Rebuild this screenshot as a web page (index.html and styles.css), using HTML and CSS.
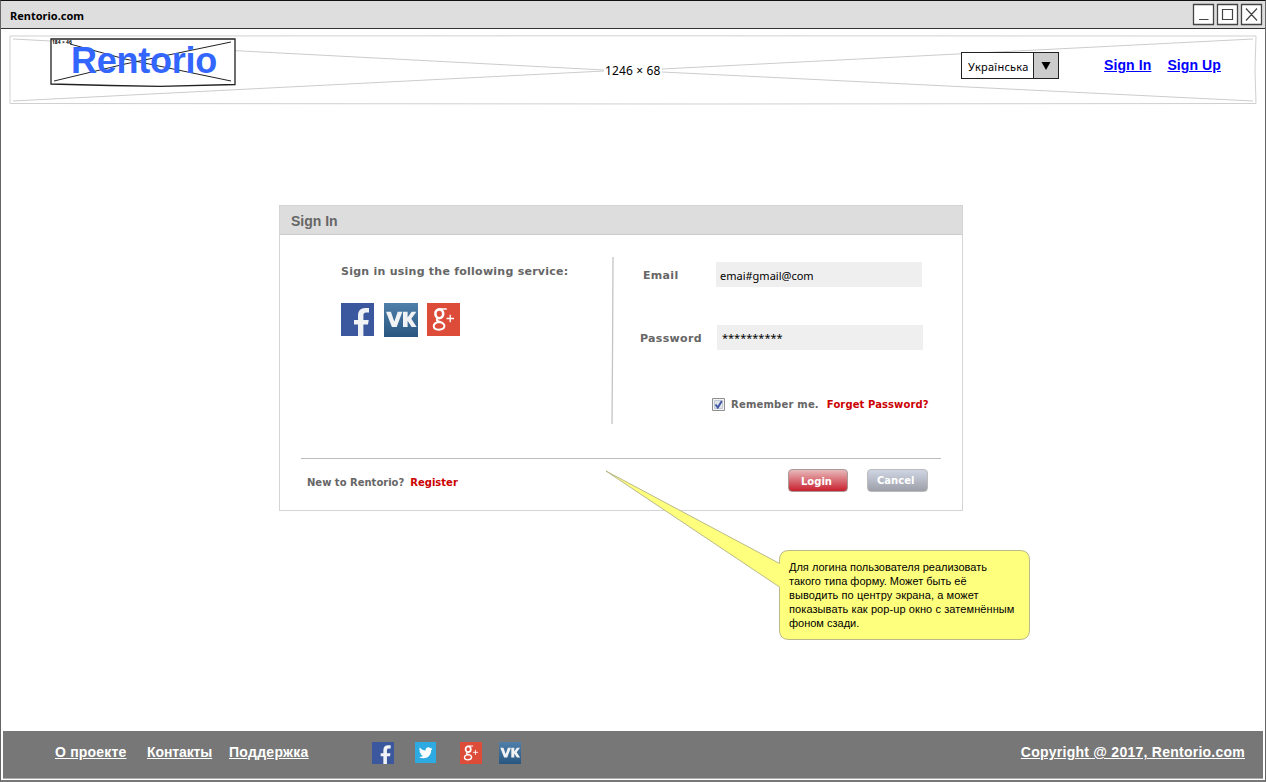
FILE: index.html
```html
<!DOCTYPE html>
<html lang="uk">
<head>
<meta charset="utf-8">
<title>Rentorio.com</title>
<link rel="stylesheet" href="styles.css">
</head>
<body>
<svg class="defs" width="0" height="0" aria-hidden="true">
  <defs>
    <linearGradient id="vkg" x1="0" y1="0" x2="0" y2="1"><stop offset="0" stop-color="#4f80aa"/><stop offset="1" stop-color="#285680"/></linearGradient>
    <symbol id="fb" viewBox="0 0 33 33"><rect width="33" height="33" fill="#3b579d"/><path d="M17 33V21.500h-4v-4.600h4V13c0-5.300 2.500-8 7.300-8H28v4.600h-2.700c-2.300 0-2.900 1-2.900 3.200v4.100h5.300l-.7 4.600h-4.600V33z" fill="#f1f2f5"/></symbol>
    <symbol id="vk" viewBox="0 0 34 34"><rect width="34" height="34" fill="url(#vkg)"/><path d="M2 8.800h4.900l3.400 9.700 3.400-9.700h4.700L12.700 24H7.900zM19 8.800h4.600v5.700l4-5.700h4.800l-5.100 7 5.400 8.200h-5.100l-4-6.300V24H19z" fill="#f0f2f4"/></symbol>
    <symbol id="gp" viewBox="0 0 33 33"><rect width="33" height="33" fill="#dd4b39"/><g fill="none" stroke="#fff"><ellipse cx="12.300" cy="10.800" rx="3.900" ry="4.400" stroke-width="2.600"/><path d="M12.500 6h7.300" stroke-width="1.500"/><path d="M11 15c-2.200 1.900-1.400 2.800 1.400 3.700 3.700 1.200 5.300 2.400 5 4.500-.3 2.400-2.800 3.500-5.700 3.500-3.200 0-5-1.400-5-3.600 0-2.600 2.500-3.900 6.200-4.200" stroke-width="2"/><path d="M19.500 15.500h7.500M23.200 11.800v7.500" stroke-width="1.300"/></g></symbol>
    <symbol id="tw" viewBox="0 0 24 24"><rect width="24" height="24" fill="#2caae1"/><path d="M20 7.600c-.6.200-1.200.4-1.800.5.700-.4 1.200-1 1.400-1.800-.7.400-1.300.6-2 .8-2.300-2.200-6-.6-5.500 2.700-2.600 0-5-1.300-6.600-3.500-.9 1.600-.5 3.500 1 4.500-.5 0-1-.2-1.400-.5 0 1.700 1.200 2.900 2.600 3.200-.5.100-1 .1-1.400 0 .4 1.200 1.600 2.200 3 2.300-1.300 1.100-3 1.400-4.800 1.300 6.600 4.100 14.400-.5 14-7.900.6-.5 1.100-1 1.500-1.600z" fill="#fff"/></symbol>
  </defs>
</svg>
<div class="window">
  <div class="titlebar">
    <span class="titlebar-text">Rentorio.com</span>
    <svg class="controls" width="71" height="23" viewBox="0 0 71 23" fill="none" stroke="#444" stroke-width="1.300">
      <path d="M1.500 1.500h20v20h-20zM25.500 1.500h20v20h-20zM49.500 1.500h20v20h-20z" fill="#fff"/>
      <path d="M7 16.500h9.500M30.500 6.500h10v10h-10zM54 5.500l11 12M65 5.500L54 17.500" stroke-width="1.200"/>
    </svg>
  </div>

  <header class="header">
    <svg class="banner" width="1248" height="70" viewBox="0 0 1248 70" fill="none" stroke="#ccc">
      <path d="M1 1L600 .8 1247 1 1246 35 1247 68.500 700 69 1 68.500z" stroke="#d0d0d0"/>
      <path d="M4 4L595 35M653 37L1244 66M4 66L595 36M653 34L1244 4"/>
    </svg>
    <div class="logo">
      <svg class="logo-frame" width="186" height="50" viewBox="0 0 186 50">
        <path d="M1 1h184v45.500L110 48.300 60 47.500 1 46z" fill="#fff" stroke="#222" stroke-width="1.300"/>
        <path d="M4 43L75 26 181 4M20 6L75 21 181 43" fill="none" stroke="#222"/>
      </svg>
      <span class="logo-size">184 × 46</span>
      <span class="logo-text">Rentorio</span>
    </div>
    <span class="banner-size">1246 × 68</span>
    <div class="select">
      <span class="select-value">Українська</span>
      <span class="select-arrow"><svg width="10" height="8" viewBox="0 0 10 8"><path d="M.5 0h9L5 8z"/></svg></span>
    </div>
    <nav class="auth"><a href="#">Sign In</a><a href="#">Sign Up</a></nav>
  </header>

  <main class="main">
    <section class="card">
      <h1 class="card-title">Sign In</h1>
      <div class="card-body">
        <div class="social">
          <p class="social-text">Sign in using the following service:</p>
          <div class="social-icons">
            <svg width="33" height="33"><use href="#fb"/></svg>
            <svg width="34" height="34"><use href="#vk"/></svg>
            <svg width="33" height="33"><use href="#gp"/></svg>
          </div>
        </div>
        <svg class="divider" width="3" height="167" viewBox="0 0 3 167"><path d="M2 0L1.500 100 1 167" fill="none" stroke="#c4c4c4" stroke-width="1.300"/></svg>
        <form class="form">
          <div class="field"><span class="label label-email">Email</span><span class="input input-email">emai#gmail@com</span></div>
          <div class="field field-password"><span class="label">Password</span><span class="input input-password">**********</span></div>
          <div class="remember">
            <svg width="13" height="13" viewBox="0 0 13 13"><path d="M.5.5h12v12H.5z" fill="#f2f3f5" stroke="#8e8f8f"/><path d="M2.500 2.500h8v8h-8z" fill="#dfe3ea" stroke="#c3c9d3"/><path d="M3.500 6.500l2.300 3L9.800 3" fill="none" stroke="#4058a4" stroke-width="1.900"/></svg>
            <span class="remember-text">Remember me.</span><a class="red" href="#">Forget Password?</a>
          </div>
        </form>
      </div>
      <div class="card-footer">
        <span class="register">New to Rentorio?<a class="red" href="#">Register</a></span>
        <span class="button login">Login</span>
        <span class="button cancel">Cancel</span>
      </div>
    </section>
    <aside class="note">
      <svg class="note-shape" width="427" height="172" viewBox="0 0 427 172"><path d="M1 1L174.500 93.500V90q0-9.500 9.500-9.500h231q9.500 0 9.500 9.500v70q0 9.500-9.500 9.500h-231q-9.500 0-9.500-9.500V117z" fill="#ff7" fill-opacity=".95" stroke="#b9b98a"/></svg>
      <p class="note-text">Для логина пользователя реализовать<br>такого типа форму. Может быть её<br><span class="note-wide">выводить по центру экрана, а может</span><br><span class="note-wide">показывать как pop-up окно с затемнённым</span><br>фоном сзади.</p>
    </aside>
  </main>

  <footer class="footer">
    <a class="about" href="#">О проекте</a>
    <a class="contacts" href="#">Контакты</a>
    <a class="support" href="#">Поддержка</a>
    <div class="footer-icons">
      <svg width="22" height="22"><use href="#fb"/></svg>
      <svg width="21" height="21"><use href="#tw"/></svg>
      <svg width="22" height="22"><use href="#gp"/></svg>
      <svg width="22" height="22"><use href="#vk"/></svg>
    </div>
    <a class="copyright" href="#">Copyright @ 2017, Rentorio.com</a>
  </footer>
</div>
</body>
</html>
```
FILE: styles.css
```css
* { box-sizing: border-box; }
body { margin: 0; background: #fff; font-family: "Liberation Sans", Arial, sans-serif; color: #000; overflow: hidden; }
h1, p { margin: 0; font-size: inherit; }
svg { display: block; flex: none; }
span, a { white-space: nowrap; }
.defs { position: absolute; }
.window { width: 1266px; height: 782px; display: flex; flex-direction: column; border: 1px solid #666; border-top-color: #111; border-bottom: 2px solid #777; }
.titlebar { height: 28px; flex: none; display: flex; justify-content: space-between; align-items: flex-start; padding: 2px 2px 0 9px; background: #dedede; border-bottom: 1px solid #333; }
.titlebar-text { font: bold 11px/14px "Comic Sans MS", "Noto Sans", sans-serif; padding-top: 6px; }

.header { position: relative; display: flex; align-items: flex-start; height: 70px; margin: 6px 8px 0; flex: none; }
.banner { position: absolute; left: 0; top: 0; }
.logo { position: relative; width: 186px; height: 50px; margin: 3px 0 0 41px; }
.logo-frame { position: absolute; left: 0; top: 0; }
.logo-size { position: absolute; left: 2px; top: 1px; font: bold 5px/7px "Noto Sans", sans-serif; }
.logo-text { position: relative; display: block; padding: 2px 0 0 21px; font: bold 36px/42px "Liberation Sans", sans-serif; letter-spacing: -.25px; color: #36f; }
.banner-size { position: relative; margin: 27px 0 0 369px; width: 58px; font: 12px/17px "Noto Sans", sans-serif; letter-spacing: .15px; }
.select { position: relative; display: flex; width: 98px; height: 27px; margin: 17px 0 0 298px; border: 1px solid #222; background: #fff; }
.select-value { width: 71px; padding-left: 6px; font: 11px/27px "Noto Sans", sans-serif; letter-spacing: .25px; }
.select-arrow { flex: 1; display: flex; align-items: center; justify-content: center; background: #ccc; border-left: 1px solid #222; }
.auth { position: relative; display: flex; gap: 16px; margin: 22px 0 0 45px; font: bold 14px/17px "Liberation Sans", sans-serif; letter-spacing: .1px; }
.auth a { color: #00f; }

.main { flex: 1; position: relative; padding: 100px 0 0 278px; }
.card { width: 684px; height: 306px; border: 1px solid #d4d4d4; display: flex; flex-direction: column; font: bold 10px/14px "DejaVu Sans", Verdana, sans-serif; color: #666; }
.card-title { height: 29px; background: #ddd; border-bottom: 1px solid #ccc; padding-left: 11px; font: bold 14px/30px "Liberation Sans", sans-serif; flex: none; }
.card-body { display: flex; height: 224px; margin-right: 21px; margin-left: 21px; padding-top: 22px; border-bottom: 1px solid #bbb; }
.social { width: 310px; padding: 8px 0 0 40px; }
.social-text { font-size: 11px; letter-spacing: .25px; white-space: nowrap; }
.social-icons { display: flex; align-items: flex-start; gap: 10px; margin-top: 24px; }
.social-icons svg:last-child { margin-left: -1px; }
.form { padding: 5px 0 0 26px; }
.field { display: flex; align-items: center; height: 25px; }
.field-password { margin-top: 38px; }
.label { width: 77px; flex: none; padding-top: 2px; font-size: 11px; letter-spacing: .32px; }
.label-email { width: 76px; padding-left: 3px; }
.input { width: 206px; height: 25px; flex: none; background: #efefef; color: #000; }
.input-email { padding-left: 4px; font: 11px/27px "Noto Sans", sans-serif; }
.input-password { padding-left: 5px; font: 11px/25px "Noto Sans", sans-serif; }
.remember { display: flex; align-items: center; margin: 47px 0 0 72px; }
.remember svg { margin-top: -1px; }
.remember-text { margin: 1px 8px 0 6px; letter-spacing: .2px; }
.remember .red { margin-top: 1px; letter-spacing: .1px; }
.red { color: #c00; text-decoration: none; }
.card-footer { display: flex; align-items: flex-start; padding: 10px 34px 0 27px; }
.register { flex: 1; padding-top: 7px; }
.register .red { margin-left: 6px; }
.button { height: 23px; border-radius: 4px; color: #fff; }
.login { width: 60px; padding: 5px 0 0 12px; border: 1px solid #a99; background: linear-gradient(#e7b9ba, #c8202e); }
.cancel { width: 61px; margin-left: 19px; padding: 4px 0 0 9px; border: 1px solid #bbb; background: linear-gradient(#d0d5e4, #9c9fa8); }
.note { position: absolute; left: 604px; top: 365px; width: 427px; height: 172px; }
.note-shape { position: absolute; left: 0; top: 0; }
.note-text { position: relative; padding: 90px 0 0 184px; font: 11px/14px "Liberation Sans", sans-serif; white-space: nowrap; }
.note-wide { letter-spacing: .09px; }

.footer { display: flex; align-items: center; height: 48px; margin: 0 2px 1px; padding: 0 18px 4px 52px; background: #777; border-bottom: 1px solid #aaa; flex: none; font: bold 14px/17px "Liberation Sans", sans-serif; }
.footer a { color: #fff; }
.about { width: 92px; letter-spacing: .18px; }
.contacts { width: 82px; letter-spacing: -.1px; }
.support { width: 143px; letter-spacing: .28px; }
.footer-icons { flex: 1; display: flex; align-items: center; }
.footer-icons svg:nth-child(2) { margin-left: 21px; }
.footer-icons svg:nth-child(3) { margin-left: 24px; }
.footer-icons svg:nth-child(4) { margin-left: 17px; }
.copyright { letter-spacing: .25px; }
```
